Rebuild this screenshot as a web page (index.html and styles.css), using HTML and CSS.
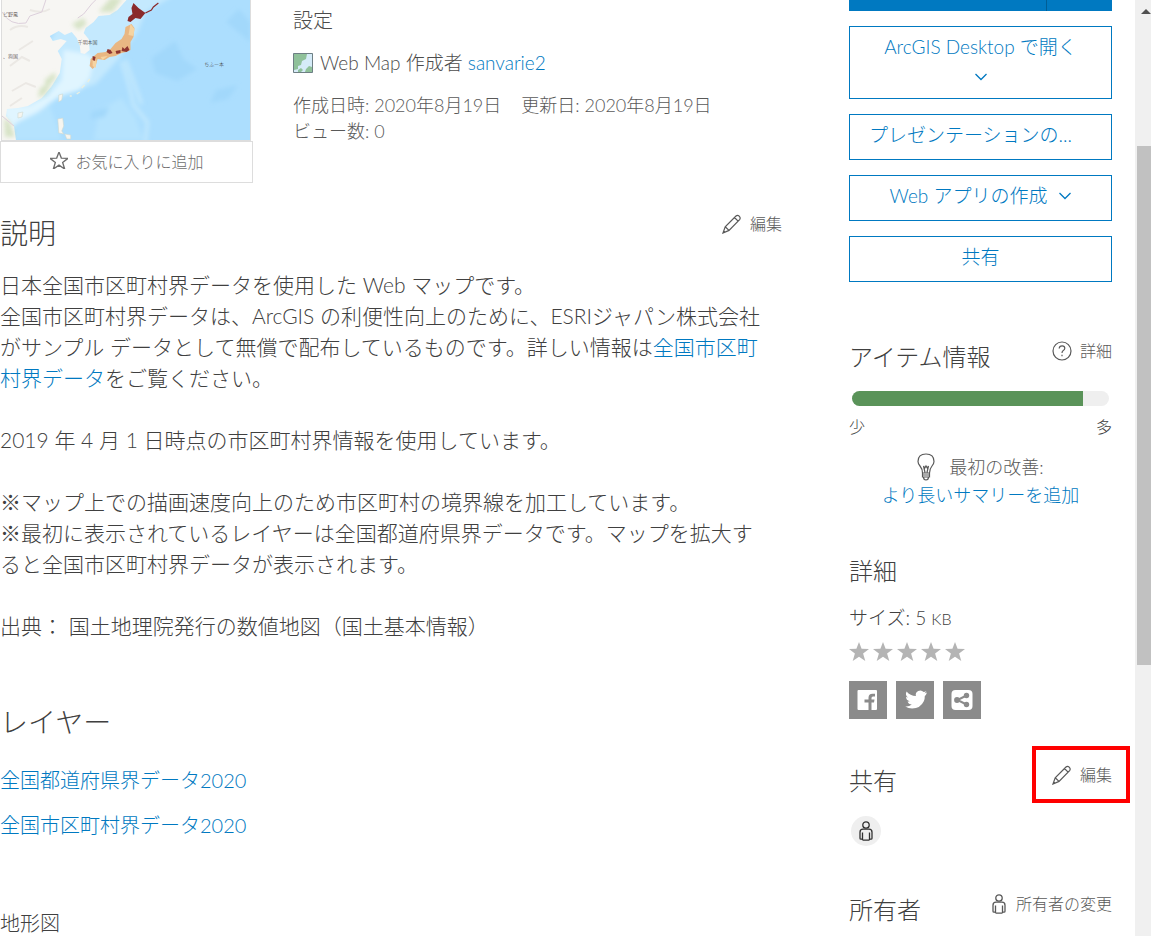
FILE: index.html
```html
<!DOCTYPE html>
<html lang="ja">
<head>
<meta charset="utf-8">
<title>全国市区町村界データ</title>
<link rel="stylesheet" href="styles.css">
</head>
<body>
<svg class="sprite" aria-hidden="true">
  <symbol id="pencil" viewBox="0 0 20 20"><path d="M1 19l2.200-6.200L14 2q1.500-1.500 3.200.200t.400 3.400L7 16.400 1 19zM3.200 12.800l3.800 3.600M12.500 3.500l3.800 3.800M1 19l1.800-1.800"/></symbol>
  <symbol id="person" viewBox="0 0 14 20"><circle cx="7" cy="4" r="3.200"/><path d="M3.500 19v-7.500M10.500 19v-7.500M3.500 19.200h7M3.500 18.200H2q-1 0-1-1v-6q0-3 3-3h6q3 0 3 3v6q0 1-1 1h-1.500"/></symbol>
  <symbol id="chevron" viewBox="0 0 12 8"><path d="M.5 1L6 6.500 11.500 1"/></symbol>
  <symbol id="star" viewBox="0 0 20 19"><path d="M10 0l2.600 6.800 7.400.300-5.900 4.500 2.200 7.400-6.300-4.300L3.700 19l2.200-7.400L0 7.100l7.400-.300z"/></symbol>
</svg>
<div class="app">
  <div class="page">
    <main class="main">
      <header class="item-header">
        <div class="preview">
          <svg class="map" viewBox="0 0 249 140" preserveAspectRatio="none" role="img" aria-label="日本地図">
            <defs><filter id="soft" x="-20%" y="-20%" width="140%" height="140%"><feGaussianBlur stdDeviation="2"/></filter></defs>
            <rect width="249" height="140" fill="#acdefe"/>
            <g filter="url(#soft)">
              <path d="M0 104q40 4 62-10l32-10 22-24 20-28 8-20 28-16H70L40 60z" fill="#c4e9fe"/>
              <path d="M120 62q8 22 12 43l14 17-2 20M124 60q10 26 16 44" fill="none" stroke="#c6eafd" stroke-width="3"/>
              <path d="M10 140l8-26 30-8 12 34zM98 110l-6 30h50l-8-22-14-20z" fill="#b5e3fe"/>
              <path d="M150 58l24-17 8 18 14 10-20 12-22-8zM90 112l18-5-5 10-14 2zM215 90l22-5-10 14-18 4zM225 22l13-13 11 13v20z" fill="#a2d8fb"/>
              <path d="M0 106l28-1 18-9 14-16 2-30 24 4 6 6-4 18-10 12-20 6-22 16-20 10-10 10z" fill="#e0f5ff"/>
              <path d="M84 26l8-7 20-6-4 12-14 10-6 4z" fill="#c4e9fe"/>
            </g>
            <path d="M0 0h125l-9 10-8 5-11 1-5 6-8 6-2 5 5 6 1 11-5 4-4-1-1-8-3-7-5-6-7 3-6-4-9 5 3 5 8-2 6 2-9 10 4 8-2 14-8 13-10 12-14 8-10 2-11 1-1 7 8 10 2 14H0z" fill="#f7f6f3"/>
            <g filter="url(#soft)" opacity=".8"><path d="M97 12l12-14h12l-10 14zM43 80l10-8 1 6-10 12zM38 88l12-6-6 12-8 4zM2 118l6 4 5 15H3zM70 24l12-6 3 6-8 6z" fill="#cfdfbb"/></g>
            <path d="M8 30q8-6 18-3M8 66l12-9 8 4M10 91l14-8 10 4M17 50l14-9M28 10q12 4 20-1M8 106l12-8" fill="none" stroke="#ebe8e4" stroke-width="2"/>
            <path d="M0 12q8 14 24 11l4-7 12-4 4-12M76 18l6-4 8-10 4-4M0 116l12 10" fill="none" stroke="#dccfdb" stroke-width="1"/>
            <path d="M57 95l4-1-1 6-3 2zM56 119l5-1 1 8-2 5 2 3-5-1zM63 134l6 1v4h-4zM16 113l5-1-1 5-4 1z" fill="#f6f5ef" stroke="#cdd8d2" stroke-width="0.600"/>
            <path d="M68 96h2M75 94l3-2M80 88l3-3M86 82l2-3" stroke="#e9efe2" stroke-width="1.500"/>
            <path d="M130 24l3 4-1 9-3 5 0 8-4 2-5 1-6 3-6 1-5 3-7-1-2 7-3 3-3-3 1-7 7-6 8-1 5-3 5-6 6-4 3-5 1-7z" fill="#e9b783"/>
            <path d="M129 24l4 5-1 7-5-1zM91 60l4 1-1 7-3-2zM99 57l7-1-5 4z" fill="#f5d4a2"/>
            <path d="M132 3l5 5 7 5-5 6-5-1-5 4-3-1 1-4 4-3-1-6z" fill="#8a2a2b"/>
            <path d="M144 13l6-3 2-3 5-4" fill="none" stroke="#8a2a2b" stroke-width="1.200"/>
            <path d="M91 56l3 1-1 4-2-1zM106 49l3 1 2 3-3 1-3-2zM114 51l5-1v3l-4 1zM121 47l2 2 3-3 2 4-3 2-5-1z" fill="#8e3530"/>
            <g fill="#37312f" font-size="5"><text x="1" y="16">ピ野鳳</text><text x="1" y="58">、狗国</text><text x="76" y="44">千明本国</text><text x="203" y="66">ちふー本</text></g>
          </svg>
          <button class="favorite" type="button"><svg class="icon-star" viewBox="0 0 20 19"><use href="#star"/></svg>お気に入りに追加</button>
        </div>
        <div class="info">
          <p class="summary">設定</p>
          <p class="kind"><svg class="icon-map" viewBox="0 0 20 20"><path d="M0 0h20v20H0z" fill="#d5ebf8"/><path d="M1 1h13l-1 5-4 2-1 4-3 1v3l-4 1zM12 19l1-3 3-3 3 1v5zM5 17l3-2 2 2-2 2H5z" fill="#8fc19a"/><path d="M.5.5h19v19H.5z" fill="none" stroke="#6e7f84"/></svg><span>Web Map 作成者 <a href="#owner">sanvarie2</a></span></p>
          <p class="dates"><span>作成日時: 2020年8月19日</span><span>更新日: 2020年8月19日</span></p>
          <p class="views">ビュー数: 0</p>
        </div>
      </header>

      <section class="description">
        <div class="head">
          <h2 class="title-lg">説明</h2>
          <button class="action" type="button"><svg class="icon-line"><use href="#pencil"/></svg>編集</button>
        </div>
        <p class="text">日本全国市区町村界データを使用した Web マップです。<br>全国市区町村界データは、ArcGIS の利便性向上のために、ESRIジャパン株式会社がサンプル データとして無償で配布しているものです。詳しい情報は<a href="#data">全国市区町村界データ</a>をご覧ください。<br><br>2019 年 4 月 1 日時点の市区町村界情報を使用しています。<br><br>※マップ上での描画速度向上のため市区町村の境界線を加工しています。<br>※最初に表示されているレイヤーは全国都道府県界データです。マップを拡大すると全国市区町村界データが表示されます。<br><br>出典： 国土地理院発行の数値地図（国土基本情報）</p>
      </section>

      <section class="layers">
        <h2 class="title-lg">レイヤー</h2>
        <ul class="layer-list">
          <li><a href="#pref">全国都道府県界データ2020</a></li>
          <li><a href="#city">全国市区町村界データ2020</a></li>
        </ul>
        <p class="basemap">地形図</p>
      </section>
    </main>

    <aside class="side">
      <div class="split"><button class="split-main" type="button" aria-label="開く"></button><button class="split-more" type="button" aria-label="その他"></button></div>
      <div class="buttons">
        <button class="outline outline-tall" type="button"><span>ArcGIS Desktop で開く</span><svg class="icon-chevron"><use href="#chevron"/></svg></button>
        <button class="outline outline-start" type="button">プレゼンテーションの...</button>
        <button class="outline" type="button"><span>Web アプリの作成</span><svg class="icon-chevron"><use href="#chevron"/></svg></button>
        <button class="outline" type="button">共有</button>
      </div>

      <section class="item-info">
        <div class="head">
          <h3 class="title">アイテム情報</h3>
          <button class="action" type="button"><svg class="icon-line" viewBox="0 0 20 20"><circle cx="10" cy="10" r="9"/><path d="M7.200 7.500q.200-2.700 2.900-2.700 2.700 0 2.700 2.500 0 1.400-1.500 2.300-1.300.800-1.300 2.400M10 13.800v1.500"/></svg>詳細</button>
        </div>
        <div class="meter"><div class="meter-fill" style="width: 90%"></div></div>
        <div class="scale"><span>少</span><span>多</span></div>
        <div class="tip">
          <p class="tip-label"><svg class="icon-bulb" viewBox="0 0 18 28"><path d="M5.500 20q0-4-2.500-7Q1 10.500 1 8.500 1 1 9 1t8 7.500q0 2-2 4.500-2.500 3-2.500 7M5.500 20h7v2h-7zM5.500 22v2h7v-2M6.500 24q0 3 2.500 3t2.500-3M6.500 13l1.500 6.500M11.500 13L10 19.500M6.500 13l1.300 2L9 13l1.300 2 1.200-2"/></svg>最初の改善:</p>
          <a href="#improve">より長いサマリーを追加</a>
        </div>
      </section>

      <section class="details">
        <h3 class="title">詳細</h3>
        <p class="size">サイズ: 5 <span class="unit">KB</span></p>
        <div class="stars" role="img" aria-label="評価">
          <svg><use href="#star"/></svg><svg><use href="#star"/></svg><svg><use href="#star"/></svg><svg><use href="#star"/></svg><svg><use href="#star"/></svg>
        </div>
        <div class="social">
          <a href="#facebook" aria-label="Facebook"><svg viewBox="0 0 38 38"><path d="M10 9h17q1 0 1 1v18q0 1-1 1h-4.500v-7.500H25l.5-3h-3V17q0-1.500 1.500-1.500h2v-2.700h-2.500q-4 0-4 4v1.700h-4v3h4V29H9.500q-1 0-1-1V10q0-1 1-1z"/></svg></a>
          <a href="#twitter" aria-label="Twitter"><svg viewBox="0 0 38 38"><path d="M31 11.500q-1.200.6-2.500.7 1.300-.8 1.900-2.300-1.300.8-2.800 1.100a4.500 4.500 0 0 0-7.700 4.100q-5.700-.3-9.300-4.700-1.900 3.600 1.400 6-1.100 0-2-.6.100 3.500 3.600 4.500-1 .3-2 .1.900 2.900 4.200 3.100-2.900 2.300-6.600 1.900 3.200 2 6.900 2 8.300 0 11.700-7.200 1.100-2.400 1-5.300 1.400-1 2.200-3.400z"/></svg></a>
          <a href="#share" aria-label="共有リンク"><svg viewBox="0 0 38 38"><rect x="8.500" y="9" width="21" height="20" rx="4"/><path class="cut" d="M23.500 14.500L14.500 19l9 4.500" fill="none" stroke-width="2"/><g class="dot"><circle cx="23.500" cy="14.500" r="2.700"/><circle cx="14" cy="19" r="2.900"/><circle cx="23.500" cy="23.500" r="2.700"/></g></svg></a>
        </div>
      </section>

      <section class="sharing">
        <div class="head">
          <h3 class="title">共有</h3>
          <button class="action marked" type="button"><svg class="icon-line"><use href="#pencil"/></svg>編集</button>
        </div>
        <div class="avatar"><svg class="icon-person"><use href="#person"/></svg></div>
      </section>

      <section class="owner" id="owner">
        <div class="head">
          <h3 class="title">所有者</h3>
          <button class="action action-wide" type="button"><svg class="icon-person"><use href="#person"/></svg>所有者の変更</button>
        </div>
      </section>
    </aside>
  </div>
  <div class="scrollbar" aria-hidden="true"><div class="scroll-up"></div><div class="scroll-thumb"></div></div>
</div>
</body>
</html>
```
FILE: styles.css
```css
* { box-sizing: border-box; }
body, h2, h3, p, ul { margin: 0; padding: 0; }
body {
  font-family: Lato, "Noto Sans CJK JP", sans-serif;
  font-weight: 300;
  color: #404040;
  background: #fff;
}
a { color: #0079c1; text-decoration: none; }
button { font: inherit; color: inherit; background: none; border: 0; padding: 0; cursor: pointer; }
svg { display: block; flex: none; }
.sprite { position: absolute; width: 0; height: 0; }

.app { display: flex; height: 100vh; overflow: hidden; }
.page {
  flex: 1;
  display: grid;
  grid-template-columns: minmax(0, 1fr) 263px;
  gap: 67px;
  padding-right: 23px;
  overflow: auto;
  scrollbar-width: none;
}

.item-header { display: flex; gap: 40px; }
.preview { width: 253px; }
.map { width: 250px; height: 141px; margin-left: 1px; border: solid #ddd; border-width: 0 1px 1px; }
.favorite {
  display: flex; align-items: center; justify-content: center; gap: 6px;
  width: 100%; height: 42px; padding-bottom: 3px;
  border: 1px solid #ddd;
  font-size: 16px; color: #6e6e6e;
}
.icon-star { width: 20px; height: 19px; padding: 1px; fill: none; stroke: #6e6e6e; stroke-width: 1.500; overflow: visible; }
.info { color: #4c4c4c; }
.summary { font-size: 20px; line-height: 30px; margin-top: 5px; }
.kind { display: flex; align-items: center; gap: 7px; margin-top: 13px; font-size: 19px; line-height: 30px; }
.icon-map { width: 20px; height: 20px; }
.dates { display: flex; gap: 20px; margin-top: 14px; }
.dates, .views { font-size: 18px; line-height: 26px; color: #595959; }

.head { display: flex; justify-content: space-between; align-items: flex-start; }
.title-lg { font-size: 28px; line-height: 42px; font-weight: 300; }
.title { font-size: 24px; line-height: 36px; font-weight: 300; }
.action { display: flex; align-items: center; gap: 8px; font-size: 16px; line-height: 24px; color: #595959; }
.action-wide { gap: 10px; }
.icon-line { width: 20px; height: 20px; fill: none; stroke: currentColor; stroke-width: 1.200; }
.icon-person { width: 14px; height: 20px; fill: none; stroke: currentColor; stroke-width: 1.300; }

.description { margin-top: 29px; }
.text { margin-top: 15px; padding-right: 10px; font-size: 21px; line-height: 31px; }
.layers { margin-top: 60px; }
.layer-list { display: grid; gap: 15px; margin-top: 22px; list-style: none; }
.layer-list, .basemap { font-size: 20px; line-height: 30px; }
.basemap { margin-top: 68px; }

.split { display: flex; height: 11px; }
.split-main { flex: 1; background: #0079c1; }
.split-more { width: 66px; background: #0079c1; border-left: 1px solid #005e95; }
.buttons { display: grid; gap: 15px; margin-top: 15px; }
.outline {
  display: flex; align-items: center; justify-content: center; gap: 12px;
  min-height: 46px; padding: 0 19px 4px;
  border: 1px solid #0079c1;
  color: #0079c1; font-size: 19px; line-height: 28px;
}
.outline-tall { flex-direction: column; min-height: 73px; padding-bottom: 12px; }
.outline-start { justify-content: flex-start; }
.icon-chevron { width: 12px; height: 8px; fill: none; stroke: currentColor; stroke-width: 1.300; }

.item-info { margin-top: 57px; }
.meter { height: 15px; margin: 16px 3px 0; border-radius: 8px; background: #efefef; overflow: hidden; }
.meter-fill { height: 100%; background: #5a9359; }
.scale { display: flex; justify-content: space-between; margin-top: 9px; font-size: 16px; line-height: 24px; }
.tip { margin-top: 14px; text-align: center; font-size: 18px; line-height: 28px; }
.tip-label { display: flex; align-items: center; justify-content: center; gap: 14px; color: #595959; }
.icon-bulb { width: 18px; height: 28px; fill: none; stroke: currentColor; stroke-width: 1.200; }

.details { margin-top: 44px; }
.size { margin-top: 14px; font-size: 19px; line-height: 30px; }
.unit { font-size: 16px; }
.stars { display: flex; gap: 4px; margin-top: 8px; }
.stars svg { width: 20px; height: 19px; fill: #b4b4b4; }
.social { display: flex; gap: 9px; margin-top: 20px; }
.social a { width: 38px; height: 38px; background: #8b8b8b; }
.social svg { width: 38px; height: 38px; fill: #fff; }
.social .cut { fill: none; stroke: #8b8b8b; }
.social .dot { fill: #8b8b8b; }

.sharing { margin-top: 44px; }
.marked { position: relative; }
.marked::after {
  content: "";
  position: absolute;
  inset: -17px -18px -16px -20px;
  border: 4px solid #f00;
}
.avatar {
  display: grid; place-items: center;
  width: 30px; height: 30px; margin: 17px 2px 0;
  border-radius: 50%; background: #efefef; color: #323232;
}
.owner { margin-top: 46px; }

.scrollbar { flex: none; width: 16px; padding-left: 2px; background: #f0f0f0; overflow: hidden; }
.scroll-up { width: 10px; height: 5px; margin: 9px 4px 0; background: #505050; clip-path: polygon(50% 0, 100% 100%, 0 100%); }
.scroll-thumb { height: 519px; margin-top: 132px; background: #c1c1c1; }
```
